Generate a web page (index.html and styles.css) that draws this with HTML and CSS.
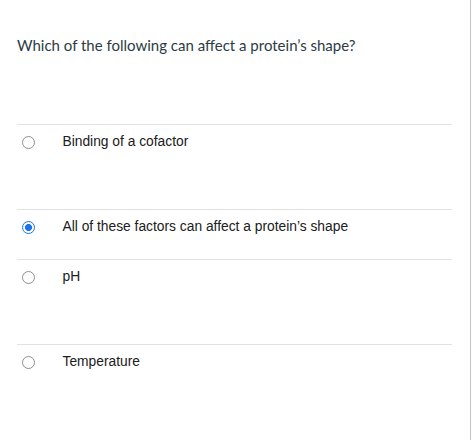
FILE: index.html
```html
<!DOCTYPE html>
<html>
<head>
<meta charset="utf-8">
<link rel="stylesheet" href="styles.css">
</head>
<body>
<div class="panel">
  <div class="question">Which of the following can affect a protein’s shape?</div>
  <div class="answers">
    <div class="answer tall">
      <span class="radio"></span>
      <span class="label">Binding of a cofactor</span>
    </div>
    <div class="answer short">
      <span class="radio checked"></span>
      <span class="label">All of these factors can affect a protein’s shape</span>
    </div>
    <div class="answer tall">
      <span class="radio"></span>
      <span class="label">pH</span>
    </div>
    <div class="answer last">
      <span class="radio"></span>
      <span class="label">Temperature</span>
    </div>
  </div>
</div>
</body>
</html>
```

FILE: styles.css
```css
html, body {
  margin: 0;
  padding: 0;
  background: #ffffff;
}
.panel {
  width: 471px;
  height: 440px;
  border-right: 1px solid #c4c4c4;
  box-sizing: border-box;
  padding: 35px 0 0 17px;
}
.question {
  font-family: Lato, "Open Sans", sans-serif;
  font-size: 15px;
  line-height: 20px;
  color: #2d3b45;
}
.answers {
  margin-top: 69px;
  width: 435px;
}
.answer {
  display: flex;
  align-items: flex-start;
  border-top: 1px solid #e2e2e2;
  padding-top: 9px;
  box-sizing: border-box;
}
.answer.tall { height: 85px; }
.answer.short { height: 50px; }
.answer.last { height: 100px; }
.radio {
  width: 13px;
  height: 13px;
  margin: 1.5px 0 0 4.5px;
  border-radius: 50%;
  border: 1px solid #8f8f8f;
  box-sizing: border-box;
  background: #fff;
  flex: none;
}
.radio.checked {
  border: 1.5px solid #1a73e8;
  background: radial-gradient(circle, #1a73e8 0 3.2px, #fff 3.8px);
}
.label {
  margin-left: 28px;
  font-family: "Liberation Sans", Arial, sans-serif;
  font-size: 13.8px;
  line-height: 16px;
  color: #202020;
}
```
